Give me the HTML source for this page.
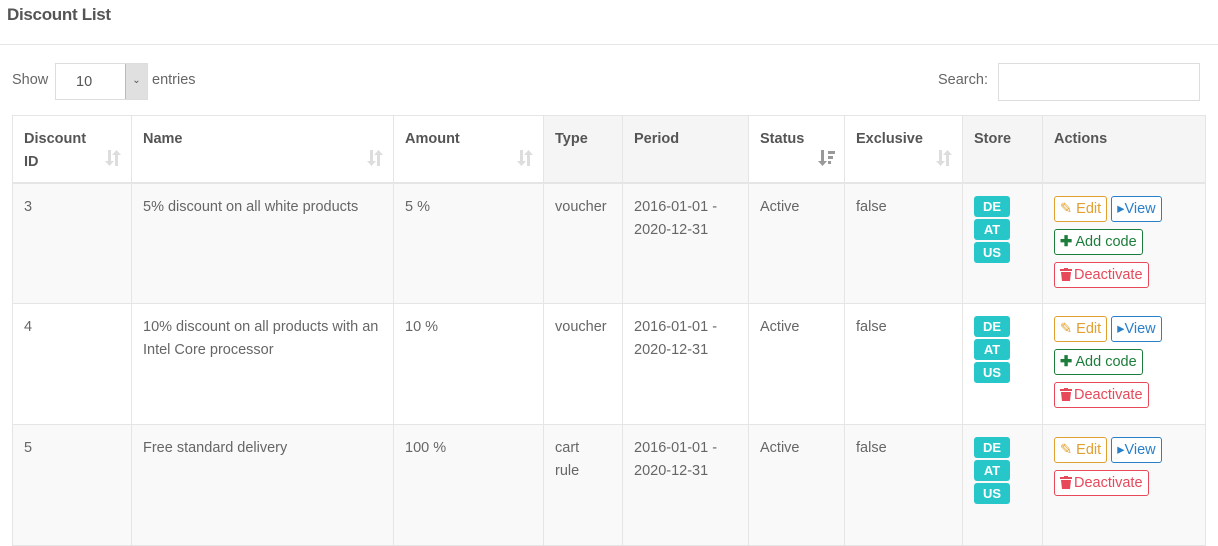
<!DOCTYPE html>
<html><head><style>
*{box-sizing:border-box}
body{margin:0;width:1218px;height:511px;overflow:hidden;background:#fff;font-family:"Liberation Sans",sans-serif;color:#666;font-size:14.5px}
.title{position:absolute;left:7px;top:5px;font-size:17px;font-weight:bold;color:#555;letter-spacing:-0.3px}
.hr{position:absolute;left:0;right:0;top:44px;border-top:1px solid #e5e5e5}
.show{position:absolute;left:12px;top:72px}
.sel{position:absolute;left:55px;top:63px;width:93px;height:37px;border:1px solid #ddd;background:#fff}
.sel span{position:absolute;left:20px;top:10px;color:#555}
.sel b{position:absolute;right:0;top:0;width:22px;height:35px;background:#e0e0e0;border-left:1px solid #bbb;font-weight:normal;font-size:10px;text-align:center;line-height:33px;color:#555}
.ent{position:absolute;left:152px;top:72px}
.srch{position:absolute;left:938px;top:72px}
.sbox{position:absolute;left:998px;top:63px;width:202px;height:38px;border:1px solid #ddd}
table{position:absolute;left:12px;top:115px;border-collapse:collapse;table-layout:fixed;width:1194px}
td,th{border:1px solid #e5e5e5;vertical-align:top;text-align:left;padding:12px 10px 0 11px;line-height:23px;position:relative}
th{height:67px;font-weight:bold;color:#555;background:#fff;border-bottom:2px solid #e5e5e5}
th.g{background:#f5f5f5}
.si{position:absolute;right:9px;top:34px}
tr.r td{height:121px}
tr.s td{background:#f9f9f9}
.bd{display:block;width:36px;height:21px;background:#26c6c9;color:#fff;font-weight:bold;font-size:13px;text-align:center;line-height:21px;border-radius:3px;margin-bottom:2px}
.btn{display:inline-block;height:26px;line-height:24px;border:1px solid;border-radius:3px;padding:0 5px;font-size:14.5px;margin-bottom:7px;background:#fff}
.btn svg{vertical-align:-2px;margin-right:2px}
.e{color:#e0a030;border-color:#e0a030}
.v{color:#2a7fc9;border-color:#2a7fc9}
.a{color:#1c7d3a;border-color:#1c7d3a}
.d{color:#e8495a;border-color:#e8495a}
</style></head><body>
<div class="title">Discount List</div>
<div class="hr"></div>
<div class="show">Show</div>
<div class="sel"><span>10</span><b>&#8964;</b></div>
<div class="ent">entries</div>
<div class="srch">Search:</div>
<div class="sbox"></div>
<svg width="0" height="0" style="position:absolute"><defs>
<g id="srt"><path d="M1 0h3v11h3l-4.5 5L-2 11h3z" transform="translate(2,0)"/><path d="M10 16h3V5h3L11.5 0 7 5h3z"/></g>
</defs></svg>
<table>
<colgroup><col style="width:119px"><col style="width:262px"><col style="width:150px"><col style="width:79px"><col style="width:126px"><col style="width:96px"><col style="width:118px"><col style="width:80px"><col style="width:163px"></colgroup>
<tr><th>Discount<br>ID<svg class="si" width="17" height="17" fill="#ddd"><use href="#srt"/></svg></th><th>Name<svg class="si" width="17" height="17" fill="#ddd"><use href="#srt"/></svg></th><th>Amount<svg class="si" width="17" height="17" fill="#ddd"><use href="#srt"/></svg></th><th class="g">Type</th><th class="g">Period</th><th>Status<svg class="si" width="17" height="17" fill="#999"><path d="M3 0h3v11h3l-4.5 5L0 11h3z"/><rect x="10" y="1" width="7" height="3"/><rect x="10" y="6" width="5" height="3"/><rect x="10" y="11" width="3" height="3"/></svg></th><th>Exclusive<svg class="si" width="17" height="17" fill="#ddd"><use href="#srt"/></svg></th><th class="g">Store</th><th class="g">Actions</th></tr>
<tr class="r s"><td>3</td><td>5% discount on all white products</td><td>5 %</td><td>voucher</td><td>2016-01-01 -<br>2020-12-31</td><td>Active</td><td>false</td><td><span class="bd">DE</span><span class="bd">AT</span><span class="bd">US</span></td><td><span class="btn e">✎ Edit</span> <span class="btn v">▸View</span><br><span class="btn a"><b>✚</b> Add code</span><br><span class="btn d"><svg width="12" height="13" fill="#e8495a"><rect x="0" y="1" width="12" height="2"/><rect x="4" y="0" width="4" height="2"/><path d="M1 4h10l-1 9H2z"/></svg>Deactivate</span></td></tr>
<tr class="r"><td>4</td><td>10% discount on all products with an Intel Core processor</td><td>10 %</td><td>voucher</td><td>2016-01-01 -<br>2020-12-31</td><td>Active</td><td>false</td><td><span class="bd">DE</span><span class="bd">AT</span><span class="bd">US</span></td><td><span class="btn e">✎ Edit</span> <span class="btn v">▸View</span><br><span class="btn a"><b>✚</b> Add code</span><br><span class="btn d"><svg width="12" height="13" fill="#e8495a"><rect x="0" y="1" width="12" height="2"/><rect x="4" y="0" width="4" height="2"/><path d="M1 4h10l-1 9H2z"/></svg>Deactivate</span></td></tr>
<tr class="r s"><td>5</td><td>Free standard delivery</td><td>100 %</td><td>cart<br>rule</td><td>2016-01-01 -<br>2020-12-31</td><td>Active</td><td>false</td><td><span class="bd">DE</span><span class="bd">AT</span><span class="bd">US</span></td><td><span class="btn e">✎ Edit</span> <span class="btn v">▸View</span><br><span class="btn d"><svg width="12" height="13" fill="#e8495a"><rect x="0" y="1" width="12" height="2"/><rect x="4" y="0" width="4" height="2"/><path d="M1 4h10l-1 9H2z"/></svg>Deactivate</span></td></tr>
</table>
</body></html>
